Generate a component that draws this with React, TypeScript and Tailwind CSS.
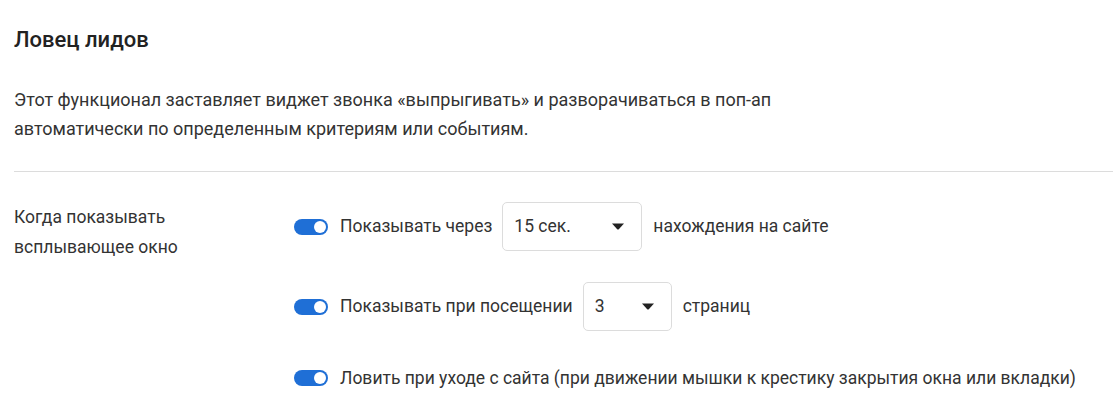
import React from 'react';

function Toggle() {
  return (
    <span className="flex-shrink-0 relative inline-flex items-center w-[34px] h-[16px] rounded-full bg-[#1f6fd6]">
      <span className="absolute right-[2px] h-[12px] w-[12px] rounded-full bg-white" />
    </span>
  );
}

function Select({ value, width }: { value: string; width: string }) {
  return (
    <div className={`flex items-center justify-between h-[49px] pl-[11px] pr-[17px] border border-[#dcdcdc] rounded-[5px] bg-white ${width}`}>
      <span>{value}</span>
      <svg width="12" height="7" viewBox="0 0 12 7" fill="#222">
        <path d="M0 0.5 L12 0.5 L6.8 6.2 Q6 7 5.2 6.2 Z" />
      </svg>
    </div>
  );
}

export default function App() {
  return (
    <div className="min-h-screen bg-white text-[#333] text-[17.5px] font-['Roboto',sans-serif]">
      <div className="pl-[14px] pt-[26px]">
        {/* Header */}
        <h2 className="text-[22px] font-medium text-[#222] leading-[28px]">Ловец лидов</h2>
        <p className="mt-[31px] text-[18px] leading-[29px] pr-4">
          Этот функционал заставляет виджет звонка «выпрыгивать» и разворачиваться в поп-ап
          <br />
          автоматически по определенным критериям или событиям.
        </p>

        <div className="mt-[28px] border-t border-[#dcdcdc]" />

        {/* Settings */}
        <div className="flex mt-[30px]">
          <div className="w-[280px] leading-[30px]">
            Когда показывать
            <br />
            всплывающее окно
          </div>
          <div className="flex flex-col">
            <div className="flex items-center">
              <Toggle />
              <span className="ml-[12px] mr-[10px]">Показывать через</span>
              <Select value="15 сек." width="w-[140px]" />
              <span className="ml-[11px]">нахождения на сайте</span>
            </div>
            <div className="flex items-center mt-[31px]">
              <Toggle />
              <span className="ml-[12px] mr-[10px]">Показывать при посещении</span>
              <Select value="3" width="w-[89px]" />
              <span className="ml-[11px]">страниц</span>
            </div>
            <div className="flex items-center mt-[32px] h-[30px]">
              <Toggle />
              <span className="ml-[12px]">Ловить при уходе с сайта (при движении мышки к крестику закрытия окна или вкладки)</span>
            </div>
          </div>
        </div>
      </div>
    </div>
  );
}
